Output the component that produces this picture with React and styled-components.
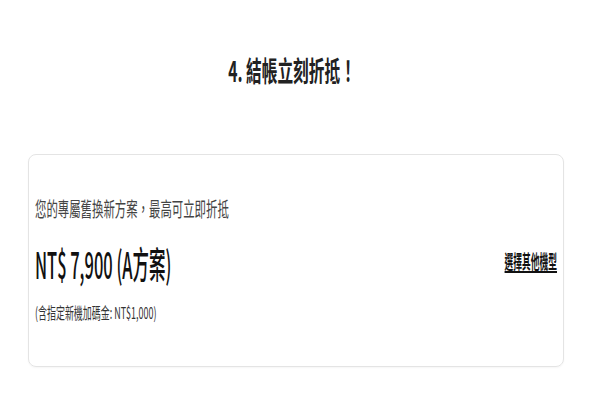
import React from "react";
import styled, { createGlobalStyle } from "styled-components";

const Global = createGlobalStyle`
  html, body { margin: 0; padding: 0; background: #fff; overflow: hidden; }
  body { font-family: "Noto Sans CJK TC", "Noto Sans", sans-serif; }
`;

const Page = styled.main`
  width: 600px;
  height: 400px;
  display: flex;
  flex-direction: column;
  align-items: stretch;
  padding: 50px 36px 0 28px;
  box-sizing: border-box;
`;

const Title = styled.h2`
  margin: 0 0 64px;
  text-align: center;
  font-size: 28px;
  line-height: 40px;
  font-weight: 700;
  color: #222;
  padding-right: 8px;
`;

const Squeeze = styled.span`
  display: inline-block;
  white-space: nowrap;
  transform: scaleX(${(p) => p.$sx});
  transform-origin: ${(p) => p.$origin || "left"} center;
`;

const Card = styled.section`
  height: 213px;
  box-sizing: border-box;
  border: 1px solid #e4e4e4;
  border-radius: 8px;
  box-shadow: 0 1px 2px rgba(0, 0, 0, 0.04);
  display: flex;
  align-items: center;
  justify-content: space-between;
  padding: 0 6px 4px 6px;
`;

const Info = styled.div`
  display: flex;
  flex-direction: column;
`;

const Lead = styled.div`
  font-size: 20px;
  line-height: 28px;
  color: #444;
  margin-bottom: 18px;
`;

const Price = styled.div`
  font-size: 37px;
  line-height: 44px;
  font-weight: 500;
  color: #111;
  margin-bottom: 16px;
`;

const Note = styled.div`
  font-size: 16px;
  line-height: 22px;
  color: #333;
`;

const Link = styled.a`
  display: inline-block;
  white-space: nowrap;
  font-size: 19px;
  line-height: 24px;
  font-weight: 700;
  color: #111;
  text-decoration: underline;
  text-decoration-thickness: 2px;
  text-underline-offset: 2px;
  transform: scaleX(0.46);
  transform-origin: right center;
  margin-top: 4px;
  cursor: pointer;
`;

export default function App() {
  return (
    <>
      <Global />
      <Page>
        <Title>
          <Squeeze $sx={0.56} $origin="center">4. 結帳立刻折抵！</Squeeze>
        </Title>
        <Card>
          <Info>
            <Lead>
              <Squeeze $sx={0.57}>您的專屬舊換新方案，最高可立即折抵</Squeeze>
            </Lead>
            <Price>
              <Squeeze $sx={0.445}>NT$ 7,900 (A方案)</Squeeze>
            </Price>
            <Note>
              <Squeeze $sx={0.56}>(含指定新機加碼金: NT$1,000)</Squeeze>
            </Note>
          </Info>
          <Link>選擇其他機型</Link>
        </Card>
      </Page>
    </>
  );
}
